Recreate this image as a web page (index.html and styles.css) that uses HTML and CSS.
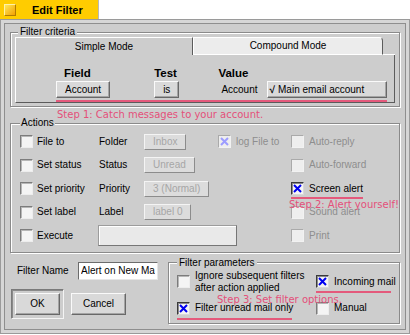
FILE: index.html
```html
<!DOCTYPE html>
<html lang="en">
<head>
  <meta charset="UTF-8">
  <title>Edit Filter</title>
  <meta name="viewport" content="width=device-width, initial-scale=1.0">
  <link rel="stylesheet" href="styles.css">
</head>
<body>
  <div class="screen">
    <div class="titlebar">
      <span class="title-icon"></span>
      <span class="title">Edit Filter</span>
    </div>

    <div class="window">
      <div class="window-inner">

        <fieldset class="group criteria">
          <legend>Filter criteria</legend>
          <div class="tabs">
            <div class="tab tab-active">Simple Mode</div>
            <div class="tab tab-other">Compound Mode</div>
          </div>
          <div class="tab-panel">
            <div class="crit-col col-field">
              <div class="crit-head">Field</div>
              <button class="btn">Account</button>
            </div>
            <div class="crit-col col-test">
              <div class="crit-head">Test</div>
              <button class="btn">is</button>
            </div>
            <div class="crit-col col-value">
              <div class="crit-head">Value</div>
              <div class="value-row">
                <span class="value-label">Account</span>
                <button class="btn btn-menu"><span class="tick">√</span>Main email account</button>
              </div>
            </div>
          </div>
        </fieldset>

        <fieldset class="group actions">
          <legend>Actions</legend>
          <div class="action-grid">
            <label class="check"><span class="box"></span>File to</label>
            <span>Folder</span>
            <button class="btn btn-off" disabled>Inbox</button>
            <label class="check off">
              <span class="box">
                <svg width="9" height="9" viewBox="0 0 9 9"><path d="M1 1L8 8M8 1L1 8" stroke="#9c9cff" stroke-width="2"/></svg>
              </span>log File to
            </label>
            <label class="check off right"><span class="box"></span>Auto-reply</label>

            <label class="check"><span class="box"></span>Set status</label>
            <span>Status</span>
            <button class="btn btn-off" disabled>Unread</button>
            <label class="check off right"><span class="box"></span>Auto-forward</label>

            <label class="check"><span class="box"></span>Set priority</label>
            <span>Priority</span>
            <button class="btn btn-off" disabled>3 (Normal)</button>
            <label class="check right">
              <span class="box box-on">
                <svg width="9" height="9" viewBox="0 0 9 9"><path d="M1 1L8 8M8 1L1 8" stroke="#0000f0" stroke-width="2"/></svg>
              </span>Screen alert
            </label>

            <label class="check"><span class="box"></span>Set label</label>
            <span>Label</span>
            <button class="btn btn-off" disabled>label 0</button>
            <label class="check off right"><span class="box"></span>Sound alert</label>

            <label class="check"><span class="box"></span>Execute</label>
            <span class="exec-field"></span>
            <label class="check off right"><span class="box"></span>Print</label>
          </div>
        </fieldset>

        <div class="bottom">
          <div class="name-col">
            <div class="name-row">
              <span class="name-label">Filter Name</span>
              <input class="name-input" type="text" value="Alert on New Mail" readonly>
            </div>
            <div class="dialog-buttons">
              <span class="default-frame"><button class="btn btn-ok">OK</button></span>
              <button class="btn btn-cancel">Cancel</button>
            </div>
          </div>

          <fieldset class="group params">
            <legend>Filter parameters</legend>
            <div class="param-grid">
              <label class="check"><span class="box"></span><span>Ignore subsequent filters<br>after action applied</span></label>
              <label class="check">
                <span class="box box-on">
                  <svg width="9" height="9" viewBox="0 0 9 9"><path d="M1 1L8 8M8 1L1 8" stroke="#0000f0" stroke-width="2"/></svg>
                </span>Incoming mail
              </label>
              <label class="check">
                <span class="box box-on">
                  <svg width="9" height="9" viewBox="0 0 9 9"><path d="M1 1L8 8M8 1L1 8" stroke="#0000f0" stroke-width="2"/></svg>
                </span>Filter unread mail only
              </label>
              <label class="check"><span class="box"></span>Manual</label>
            </div>
          </fieldset>
        </div>

      </div>
    </div>

    <!-- tutorial marks drawn over the dialog -->
    <span class="mark mark-1"></span>
    <span class="note note-1">Step 1: Catch messages to your account.</span>
    <span class="mark mark-2"></span>
    <span class="note note-2">Step 2: Alert yourself!</span>
    <span class="mark mark-3"></span>
    <span class="note note-3">Step 3: Set filter options.</span>
    <span class="mark mark-4"></span>
  </div>
</body>
</html>
```

FILE: styles.css
```css
* {
  box-sizing: border-box;
}
body {
  margin: 0;
  background: #fff;
  font-family: "Liberation Sans", Arial, sans-serif;
  font-size: 10px;
  line-height: 12px;
  color: #000;
}
.screen {
  position: relative;
  width: 410px;
  height: 335px;
  overflow: hidden;
}

/* title tab */
.titlebar {
  display: flex;
  align-items: center;
  width: 99px;
  height: 19px;
  padding-left: 4px;
  background: #ffcc00;
  border-right: 1px solid #b8b8b8;
}
.title-icon {
  width: 12px;
  height: 12px;
  border: 1px solid;
  border-color: #fff2a8 #b27a00 #b27a00 #fff2a8;
  background: linear-gradient(135deg, #ffe85a, #f2a000);
}
.title {
  margin-left: 16px;
  font-size: 11px;
  font-weight: bold;
}

/* window frame */
.window {
  height: 315px;
  padding: 3px;
  background: #d6d6d6;
  border: 1px solid #9a9a9a;
}
.window-inner {
  height: 100%;
  padding: 3px 5px 0 5px;
  background: #cdcdcd;
  border: 1px solid #8e8e8e;
}

/* group boxes */
.group {
  margin: 0;
  min-width: 0;
  border: 1px solid #8a8a8a;
  box-shadow: inset 1px 1px 0 #fff, 1px 1px 0 #fff;
}
.group legend {
  padding: 0 2px;
  line-height: 10px;
  background: #cdcdcd;
}

/* filter criteria */
.criteria {
  padding: 0 4px 3px 4px;
}
.criteria legend {
  margin-left: 3px;
}
.tabs {
  display: flex;
  height: 18px;
}
.tabs::after {
  content: "";
  flex: 1;
  border-bottom: 1px solid #fff;
}
.tab {
  display: flex;
  align-items: center;
  justify-content: center;
  border-top: 1px solid #fff;
  border-left: 1px solid #fff;
  border-right: 1px solid #5c5c5c;
}
.tab-active {
  width: 178px;
  background: #cdcdcd;
}
.tab-other {
  width: 190px;
  background: #ececec;
  border-bottom: 1px solid #fff;
  border-top-right-radius: 4px;
}
.tab-panel {
  display: flex;
  align-items: flex-start;
  height: 48px;
  padding: 11px 0 0 40px;
  border-left: 1px solid #fff;
  border-right: 1px solid #5c5c5c;
  border-bottom: 1px solid #5c5c5c;
}
.crit-col {
  display: flex;
  flex-direction: column;
  align-items: flex-start;
}
.crit-head {
  font-size: 11.5px;
  font-weight: bold;
  line-height: 14px;
  margin-bottom: 1px;
}
.col-field .crit-head {
  margin-left: 8px;
}
.col-test {
  margin-left: 44px;
}
.col-value {
  margin-left: 39px;
}
.value-row {
  display: flex;
  align-items: center;
}
.value-label {
  margin: 0 9px 0 3px;
}

/* buttons */
.btn {
  display: inline-flex;
  align-items: center;
  justify-content: center;
  height: 17px;
  padding: 0 8px;
  font: inherit;
  color: #000;
  background: #d9d9d9;
  border: 1px solid;
  border-color: #fafafa #686868 #686868 #fafafa;
  box-shadow: inset -1px -1px 0 #a4a4a4;
}
.btn-menu {
  width: 120px;
  justify-content: flex-start;
  padding-left: 2px;
}
.tick {
  font-weight: bold;
  margin-right: 3px;
}
.btn-off {
  height: 16px;
  color: #a6a6a6;
  background: #dcdcdc;
  border-color: #f4f4f4 #8c8c8c #8c8c8c #f4f4f4;
  box-shadow: none;
}

/* check boxes */
.check {
  display: flex;
  align-items: center;
  gap: 5px;
}
.box {
  display: flex;
  align-items: center;
  justify-content: center;
  flex: none;
  width: 13px;
  height: 13px;
  background: #f4f4f4;
  border: 1px solid;
  border-color: #7c7c7c #ededed #ededed #7c7c7c;
  box-shadow: inset 1px 1px 0 #b6b6b6;
}
.box-on {
  border-color: #3a3a3a #d8d8d8 #d8d8d8 #3a3a3a;
  box-shadow: inset 1px 1px 0 #8a8a8a;
}
.off {
  color: #8e8e8e;
}
.off .box {
  background: #eeeeee;
  border-color: #aaaaaa #f2f2f2 #f2f2f2 #aaaaaa;
  box-shadow: none;
}

/* actions */
.actions {
  margin-top: 11px;
  padding: 2px 0 4px 9px;
}
.actions legend {
  padding: 0 1px;
}
.action-grid {
  display: grid;
  grid-template-columns: 79px 45px 74px 73px 1fr;
  grid-auto-rows: 23.5px;
  align-items: center;
  justify-items: start;
}
.action-grid > .check:first-child,
.action-grid > .check:nth-child(6),
.action-grid > .check:nth-child(10),
.action-grid > .check:nth-child(14),
.action-grid > .check:nth-child(18) {
  gap: 4px;
}
.right {
  grid-column: 5;
}
.exec-field {
  grid-column: 2 / span 3;
  width: 139px;
  height: 21px;
  margin-left: -1px;
  background: #e9e9e9;
  border: 1px solid;
  border-color: #9c9c9c #767676 #767676 #9c9c9c;
  box-shadow: inset 1px 1px 0 #fff;
}

/* bottom part */
.bottom {
  display: flex;
  align-items: flex-start;
}
.name-col {
  width: 158px;
  padding: 9px 0 0 1px;
}
.name-row {
  display: flex;
  align-items: center;
  padding-left: 6px;
}
.name-label {
  width: 61px;
}
.name-input {
  width: 80px;
  height: 18px;
  padding: 0 2px;
  font: inherit;
  color: #000;
  background: #fff;
  border: 1px solid;
  border-color: #6c6c6c #e6e6e6 #e6e6e6 #6c6c6c;
  outline: none;
}
.dialog-buttons {
  display: flex;
  align-items: center;
  gap: 7px;
  margin-top: 9px;
}
.default-frame {
  display: inline-flex;
  padding: 3px;
  border: 1px solid;
  border-color: #7a7a7a #f4f4f4 #f4f4f4 #7a7a7a;
  box-shadow: 1px 1px 0 #8a8a8a inset;
}
.btn-ok {
  width: 45px;
  height: 22px;
}
.btn-cancel {
  width: 55px;
  height: 22px;
}
.params {
  flex: 1;
  margin-top: 5px;
  padding: 2px 0 7px 8px;
}
.param-grid {
  display: grid;
  grid-template-columns: 139px 1fr;
  grid-template-rows: 24px 15px;
  row-gap: 7px;
  align-items: center;
}

/* tutorial marks */
.mark {
  position: absolute;
  height: 2px;
  background: #e45a7c;
}
.mark-1 { left: 56px; top: 100px; width: 331px; }
.mark-2 { left: 291px; top: 197px; width: 72px; }
.mark-3 { left: 316px; top: 291px; width: 75px; }
.mark-4 { left: 177px; top: 318px; width: 115px; }
.note {
  position: absolute;
  font-family: "DejaVu Sans", sans-serif;
  font-size: 10px;
  line-height: 11px;
  color: #e4507a;
  white-space: nowrap;
}
.note-1 { left: 57px; top: 109px; }
.note-2 { left: 289px; top: 199px; }
.note-3 { left: 217px; top: 294px; }
```
